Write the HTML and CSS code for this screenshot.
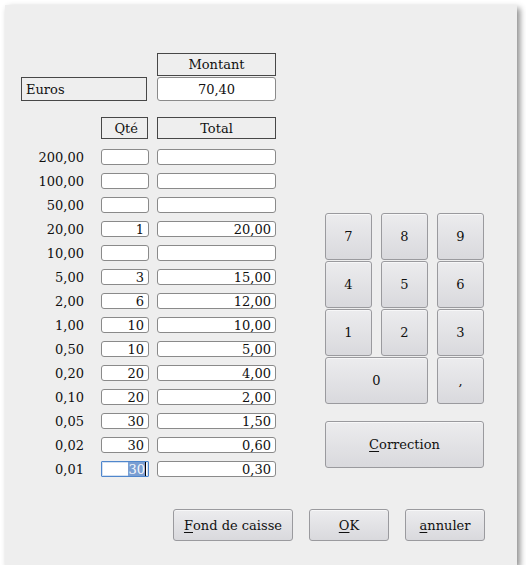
FILE: index.html
```html
<!DOCTYPE html>
<html lang="fr">
<head>
<meta charset="utf-8">
<title>Caisse</title>
<link rel="stylesheet" href="styles.css">
</head>
<body>
<div class="window">
  <div class="main">
    <div class="form">
      <div class="grid top">
        <div class="box montant">Montant</div>
        <div class="box euros">Euros</div>
        <div class="field amount">70,40</div>
      </div>

      <div class="grid heads">
        <div class="box qte">Qté</div>
        <div class="box total">Total</div>
      </div>

      <div class="grid rows">
        <div class="label">200,00</div><div class="field"></div><div class="field"></div>
        <div class="label">100,00</div><div class="field"></div><div class="field"></div>
        <div class="label">50,00</div><div class="field"></div><div class="field"></div>
        <div class="label">20,00</div><div class="field">1</div><div class="field">20,00</div>
        <div class="label">10,00</div><div class="field"></div><div class="field"></div>
        <div class="label">5,00</div><div class="field">3</div><div class="field">15,00</div>
        <div class="label">2,00</div><div class="field">6</div><div class="field">12,00</div>
        <div class="label">1,00</div><div class="field">10</div><div class="field">10,00</div>
        <div class="label">0,50</div><div class="field">10</div><div class="field">5,00</div>
        <div class="label">0,20</div><div class="field">20</div><div class="field">4,00</div>
        <div class="label">0,10</div><div class="field">20</div><div class="field">2,00</div>
        <div class="label">0,05</div><div class="field">30</div><div class="field">1,50</div>
        <div class="label">0,02</div><div class="field">30</div><div class="field">0,60</div>
        <div class="label">0,01</div><div class="field focus"><span class="sel">30</span><span class="caret"></span></div><div class="field">0,30</div>
      </div>
    </div>

    <div class="pad">
      <div class="keys">
        <button class="btn key">7</button>
        <button class="btn key">8</button>
        <button class="btn key">9</button>
        <button class="btn key">4</button>
        <button class="btn key">5</button>
        <button class="btn key">6</button>
        <button class="btn key">1</button>
        <button class="btn key">2</button>
        <button class="btn key">3</button>
        <button class="btn key zero">0</button>
        <button class="btn key">,</button>
      </div>
      <button class="btn correction"><u>C</u>orrection</button>
    </div>
  </div>

  <div class="actions">
    <button class="btn act wide"><u>F</u>ond de caisse</button>
    <button class="btn act"><u>O</u>K</button>
    <button class="btn act"><u>a</u>nnuler</button>
  </div>
</div>
</body>
</html>
```

FILE: styles.css
```css
* { box-sizing: border-box; }

html, body {
  margin: 0;
  padding: 0;
  background: #ffffff;
}

body {
  font-family: "DejaVu Serif", serif;
  font-size: 13px;
  color: #111;
}

.window {
  margin: 5px 0 0 5px;
  width: 512px;
  height: 560px;
  background: #eeeeee;
  box-shadow: 3px 3px 6px rgba(0, 0, 0, 0.45);
  display: flex;
  flex-direction: column;
  padding: 48px 32px 24px 16px;
}

.main {
  display: flex;
  gap: 49px;
}

.form {
  display: flex;
  flex-direction: column;
  width: 255px;
}

.grid {
  display: grid;
  grid-template-columns: 72px 48px 119px;
  column-gap: 8px;
}

.top {
  grid-template-rows: 23px 24px;
  row-gap: 1px;
}

.heads {
  margin-top: 16px;
  grid-template-rows: 22px;
}

.rows {
  margin-top: 10px;
  grid-auto-rows: 16px;
  row-gap: 8px;
}

.box {
  border: 1px solid #474747;
  background: #eeeeee;
  display: flex;
  align-items: center;
  justify-content: center;
  line-height: 1;
}

.montant {
  grid-column: 3;
  grid-row: 1;
}

.euros {
  grid-column: 1 / 3;
  grid-row: 2;
  justify-content: flex-start;
  padding-left: 4px;
  margin-right: 2px;
}

.field.amount {
  grid-column: 3;
  grid-row: 2;
  height: 24px;
  justify-content: center;
  padding-right: 0;
}

.qte {
  grid-column: 2;
  justify-content: flex-end;
  padding-right: 9px;
  margin-right: 1px;
}

.total {
  grid-column: 3;
}

.label {
  display: flex;
  align-items: center;
  justify-content: flex-end;
  padding-right: 9px;
  line-height: 1;
}

.field {
  background: #ffffff;
  border: 1px solid #8a8a8a;
  border-radius: 3px;
  display: flex;
  align-items: center;
  justify-content: flex-end;
  padding-right: 4px;
  line-height: 1;
  height: 16px;
}

.field.focus {
  border-color: #4f86cc;
  border-radius: 1px;
  box-shadow: inset 0 0 0 1px rgba(79, 134, 204, 0.25);
  padding-right: 2px;
}

.sel {
  background: #7a9ed2;
  color: #f4f6fa;
  height: 14px;
  display: flex;
  align-items: center;
}

.caret {
  display: block;
  width: 1px;
  height: 14px;
  background: #000;
}

.pad {
  margin-top: 160px;
  display: flex;
  flex-direction: column;
  gap: 17px;
  width: 159px;
}

.keys {
  display: grid;
  grid-template-columns: repeat(3, 47px);
  grid-auto-rows: 47px;
  column-gap: 9px;
  row-gap: 1px;
}

.btn {
  font-family: "DejaVu Serif", serif;
  font-size: 13px;
  color: #111;
  background: linear-gradient(#ececee, #d9d9dd);
  border: 1px solid #9a9a9e;
  border-radius: 3px;
  padding: 0;
  margin: 0;
  display: flex;
  align-items: center;
  justify-content: center;
  box-shadow: inset 0 1px 0 rgba(255, 255, 255, 0.6);
}

.zero {
  grid-column: 1 / 3;
}

.correction {
  height: 47px;
  width: 159px;
}

.actions {
  margin-top: auto;
  display: flex;
  justify-content: flex-end;
  gap: 16px;
}

.act {
  width: 80px;
  height: 32px;
}

.act.wide {
  width: 120px;
}

u {
  text-decoration: underline;
  text-underline-offset: 2px;
}
```
